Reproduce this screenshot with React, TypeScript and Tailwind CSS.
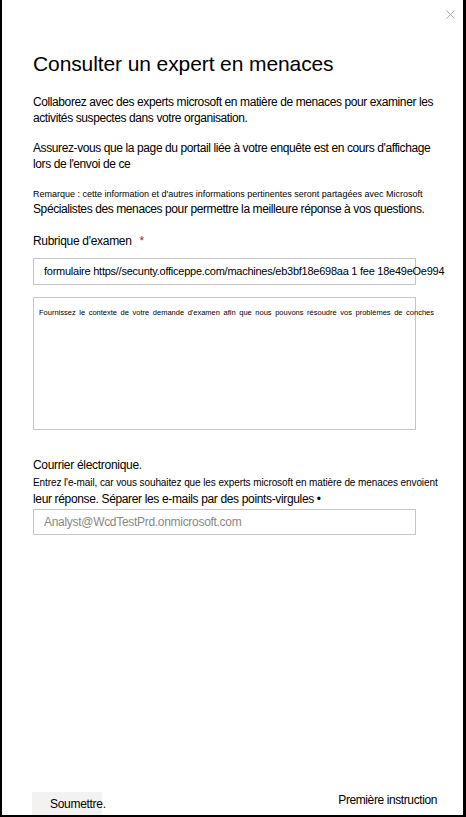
import React from "react";

export default function App() {
  return (
    <div
      className="w-[466px] h-[817px] overflow-hidden bg-white border-l-2 border-r-[3px] border-b-2 border-black relative flex flex-col text-black"
      style={{ fontFamily: '"Liberation Sans", Arial, sans-serif' }}
    >
      <div className="flex justify-end pr-[8px] pt-[10px] h-[30px]">
        <svg width="9" height="9" viewBox="0 0 9 9" className="text-[#b3b0ad]">
          <path d="M0.5 0.5 L8.5 8.5 M8.5 0.5 L0.5 8.5" stroke="currentColor" strokeWidth="1" />
        </svg>
      </div>
      <div className="pl-[31px] pr-[20px] flex flex-col">
        <h1 className="text-[21px] leading-[28px] mt-[20px] tracking-[-0.1px]">Consulter un expert en menaces</h1>
        <p className="text-[12px] leading-[16px] mt-[16px] tracking-[-0.4px]">
          Collaborez avec des experts microsoft en matière de menaces pour examiner les activités suspectes dans votre organisation.
        </p>
        <p className="text-[12px] leading-[16px] mt-[14px] tracking-[-0.4px]">
          Assurez-vous que la page du portail liée à votre enquête est en cours d'affichage lors de l'envoi de ce
        </p>
        <p className="text-[9px] leading-[14px] mt-[15px] whitespace-nowrap">
          Remarque : cette information et d'autres informations pertinentes seront partagées avec Microsoft
        </p>
        <p className="text-[12px] leading-[16px] whitespace-nowrap tracking-[-0.4px]">
          Spécialistes des menaces pour permettre la meilleure réponse à vos questions.
        </p>
        <div className="mt-[16px] text-[12px] leading-[16px] flex tracking-[-0.3px]">
          <span>Rubrique d'examen</span>
          <span className="ml-[8px] text-[#a4262c]">*</span>
        </div>
        <div className="mt-[9px] w-[383px] h-[27px] border border-[#c8c6c4] flex items-center pl-[10px] overflow-visible">
          <span className="text-[11px] whitespace-nowrap tracking-[-0.25px]">
            formulaire https//secunty.officeppe.com/machines/eb3bf18e698aa 1 fee 18e49eOe994
          </span>
        </div>
        <div className="mt-[12px] w-[383px] h-[133px] border border-[#c8c6c4] pl-[5px] pt-[10px] overflow-visible text-[7.5px] leading-[9px]">
          <span className="whitespace-nowrap [word-spacing:1.5px]">
            Fournissez le contexte de votre demande d'examen afin que nous pouvons résoudre vos problèmes de conches
          </span>
        </div>
        <div className="mt-[27px] text-[12px] leading-[16px] tracking-[-0.3px]">Courrier électronique.</div>
        <div className="mt-[3px] text-[10px] leading-[14px] whitespace-nowrap tracking-[-0.1px]">
          Entrez l'e-mail, car vous souhaitez que les experts microsoft en matière de menaces envoient
        </div>
        <div className="text-[12px] leading-[16px] mt-[1px] whitespace-nowrap tracking-[-0.35px]">
          leur réponse. Séparer les e-mails par des points-virgules •
        </div>
        <div className="mt-[2px] w-[383px] h-[26px] border border-[#c8c6c4] flex items-center pl-[10px]">
          <span className="text-[12px] text-[#8a8886] tracking-[-0.3px]">Analyst@WcdTestPrd.onmicrosoft.com</span>
        </div>
      </div>
      <div className="flex-1" />
      <div className="flex items-end justify-between pl-[30px] pr-[26px]">
        <div className="w-[70px] h-[23px] bg-[#f3f2f1] flex items-end pl-[18px] pb-[4px]">
          <span className="text-[12px] leading-[14px] tracking-[-0.3px]">Soumettre.</span>
        </div>
        <span className="text-[12px] leading-[14px] mb-[8px] tracking-[-0.4px]">Première instruction</span>
      </div>
    </div>
  );
}
